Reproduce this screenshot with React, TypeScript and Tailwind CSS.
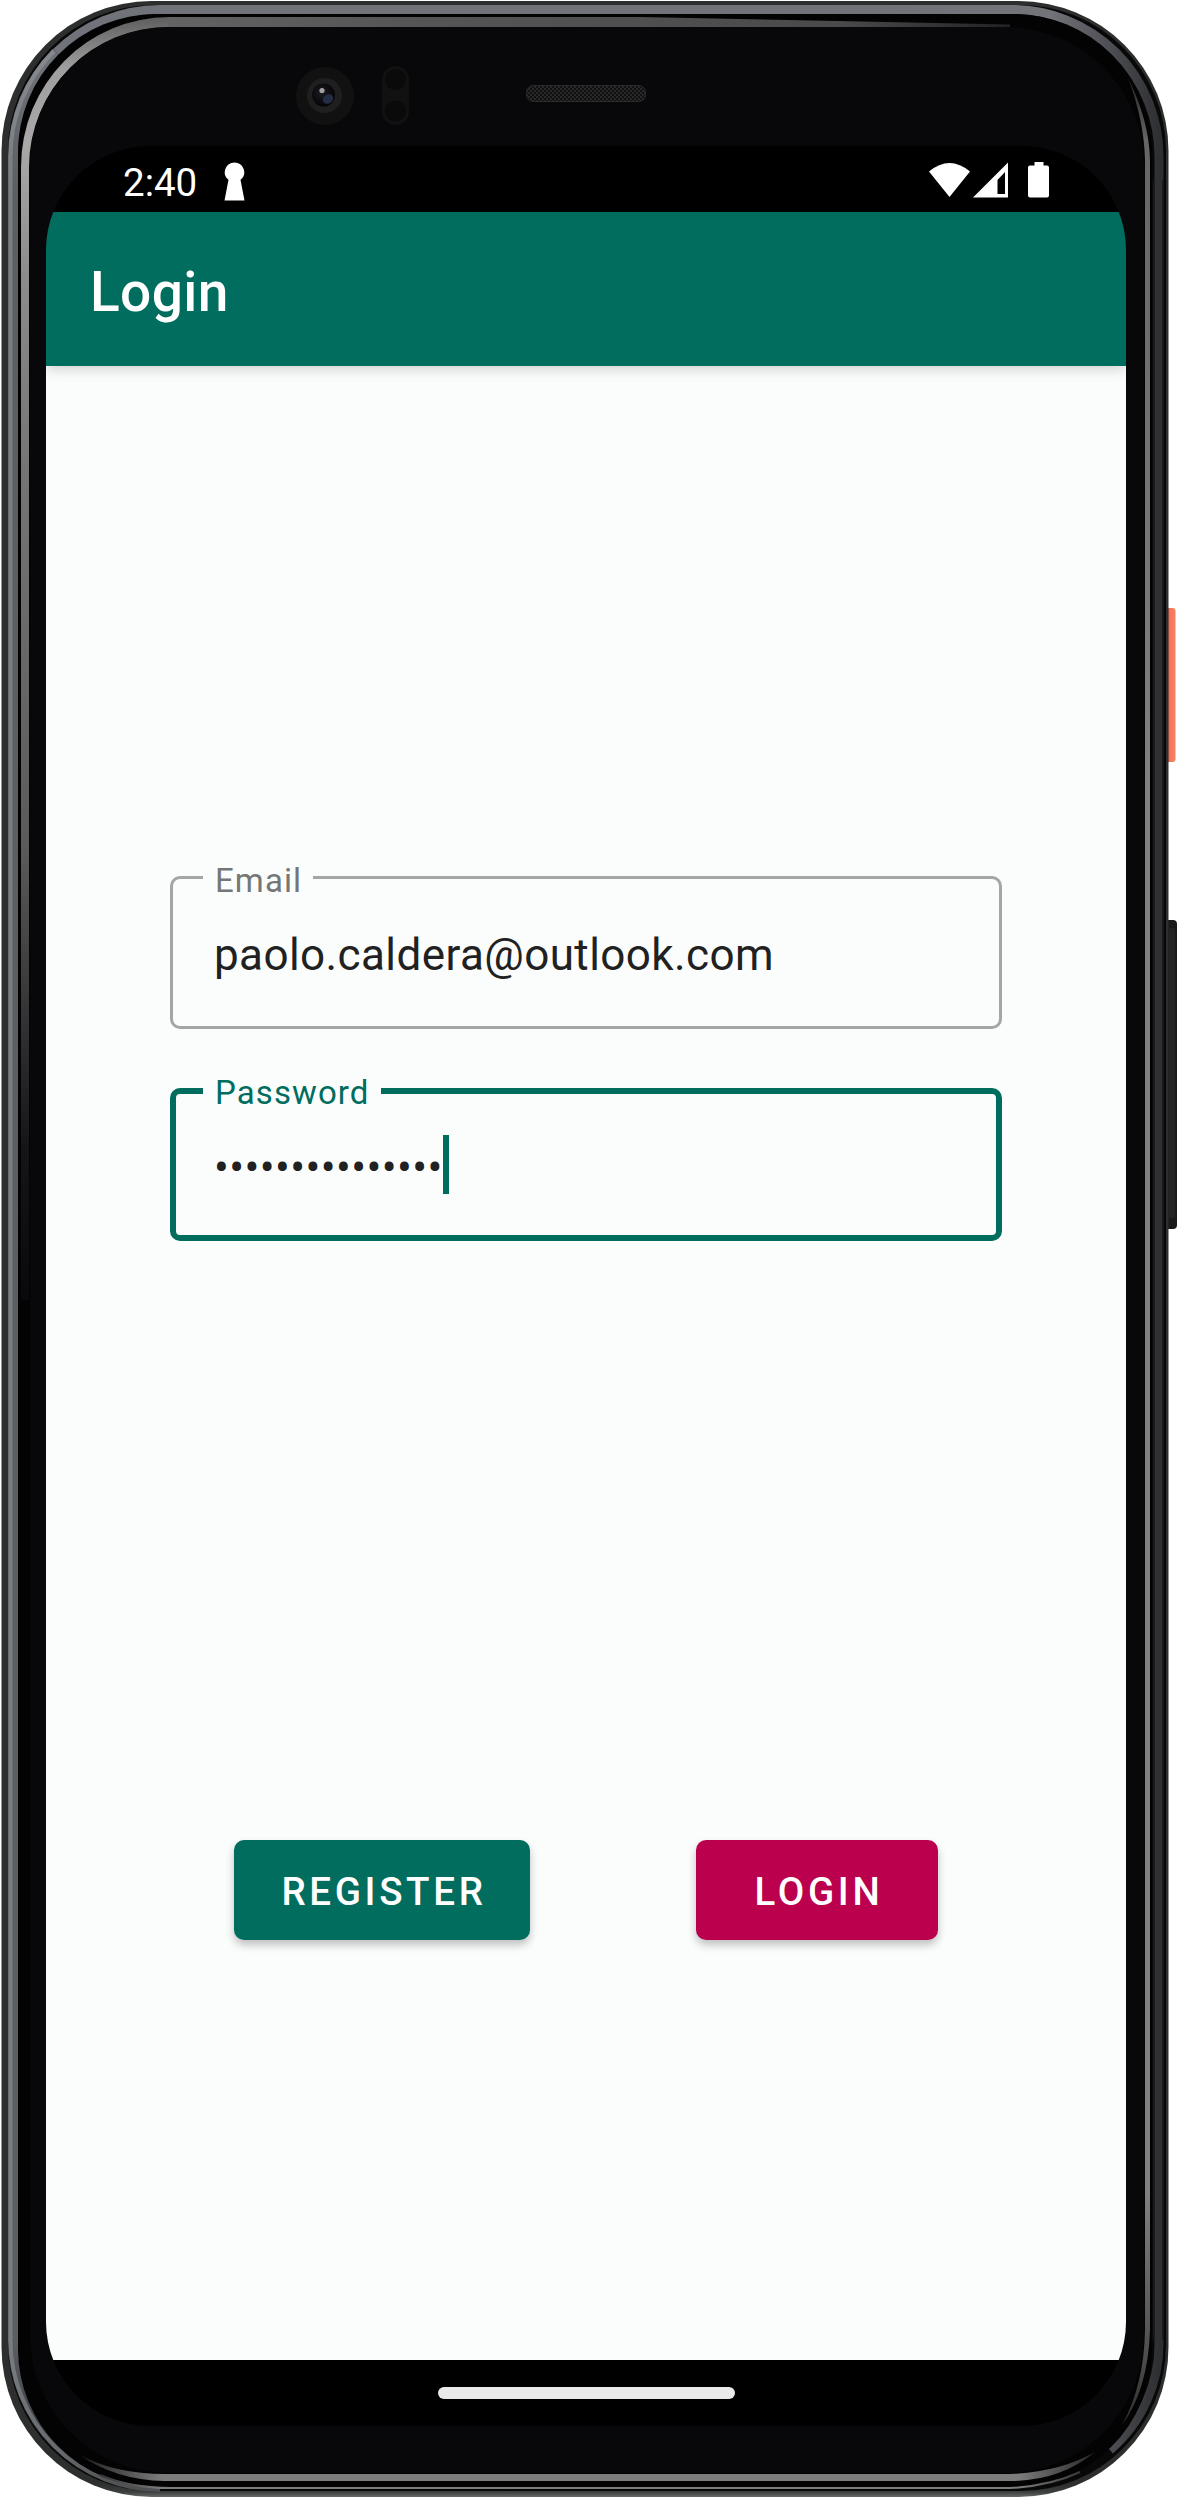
import React from "react";

function DeviceArt() {
  return (
    <svg className="absolute inset-0" width="1178" height="2498" viewBox="0 0 1178 2498" aria-hidden="true">
      <defs>
        <linearGradient id="rimTop" x1="50" x2="1160" y1="0" y2="0" gradientUnits="userSpaceOnUse">
          <stop offset="0" stopColor="#707379" />
          <stop offset="0.9" stopColor="#73737a" />
          <stop offset="0.96" stopColor="#4a4b50" />
          <stop offset="1" stopColor="#2e2f31" />
        </linearGradient>
        <linearGradient id="rimLeft" x1="0" x2="0" y1="50" y2="2488" gradientUnits="userSpaceOnUse">
          <stop offset="0" stopColor="#707379" />
          <stop offset="0.06" stopColor="#5b5e63" />
          <stop offset="0.94" stopColor="#5b5e63" />
          <stop offset="0.985" stopColor="#3a3b3e" />
          <stop offset="1" stopColor="#0c0c0d" />
        </linearGradient>
        <linearGradient id="topBand" x1="150" x2="1010" y1="0" y2="0" gradientUnits="userSpaceOnUse">
          <stop offset="0" stopColor="#646464" />
          <stop offset="0.3" stopColor="#555555" />
          <stop offset="0.8" stopColor="#4a4a4a" />
          <stop offset="1" stopColor="#222222" />
        </linearGradient>
        <linearGradient id="leftBand" x1="0" x2="0" y1="17" y2="1300" gradientUnits="userSpaceOnUse">
          <stop offset="0" stopColor="#5e5e5e" />
          <stop offset="0.04" stopColor="#9f9f9f" />
          <stop offset="0.1" stopColor="#a8a8a8" />
          <stop offset="0.2" stopColor="#8c8c8c" />
          <stop offset="0.35" stopColor="#757575" />
          <stop offset="0.65" stopColor="#5a5a5a" />
          <stop offset="0.88" stopColor="#151517" />
          <stop offset="1" stopColor="#09090b" />
        </linearGradient>
        <linearGradient id="rightBand" x1="0" x2="0" y1="70" y2="2430" gradientUnits="userSpaceOnUse">
          <stop offset="0" stopColor="#1c1c1d" />
          <stop offset="0.03" stopColor="#666666" />
          <stop offset="0.3" stopColor="#808080" />
          <stop offset="0.9" stopColor="#808080" />
          <stop offset="0.97" stopColor="#4c4c4c" />
          <stop offset="1" stopColor="#2a2a2a" />
        </linearGradient>
        <linearGradient id="bottomBand" x1="80" x2="1100" y1="0" y2="0" gradientUnits="userSpaceOnUse">
          <stop offset="0" stopColor="#1c1c1c" />
          <stop offset="0.08" stopColor="#7c7c7c" />
          <stop offset="0.92" stopColor="#7c7c7c" />
          <stop offset="1" stopColor="#222222" />
        </linearGradient>
        <linearGradient id="body" x1="0" x2="0" y1="2484" y2="2497" gradientUnits="userSpaceOnUse">
          <stop offset="0" stopColor="#2d2e2e" />
          <stop offset="0.6" stopColor="#3c3d3d" />
          <stop offset="1" stopColor="#666767" />
        </linearGradient>
        <linearGradient id="orange" x1="1167" x2="1176" y1="0" y2="0" gradientUnits="userSpaceOnUse">
          <stop offset="0" stopColor="#d9583e" />
          <stop offset="0.35" stopColor="#f4775b" />
          <stop offset="1" stopColor="#f58468" />
        </linearGradient>
        <radialGradient id="lens" cx="0.4" cy="0.4" r="0.6">
          <stop offset="0" stopColor="#1a1a20" />
          <stop offset="1" stopColor="#050507" />
        </radialGradient>
        <pattern id="mesh" width="4" height="4" patternUnits="userSpaceOnUse">
          <rect width="4" height="4" fill="#101010" />
          <circle cx="1" cy="1" r="0.9" fill="#333333" />
          <circle cx="3" cy="3" r="0.9" fill="#333333" />
        </pattern>
      </defs>

      {/* side buttons */}
      <rect x="1160" y="608" width="15.5" height="154" rx="3" fill="url(#orange)" />
      <rect x="1160" y="920" width="17" height="309" rx="4" fill="#1a1a1a" />
      <rect x="1169" y="928" width="6" height="290" rx="2" fill="#242424" />

      {/* body and metallic rim */}
      <rect x="1.500" y="1" width="1167" height="2496" rx="150" fill="url(#body)" />
      <rect x="8" y="5" width="1158" height="2486" rx="146" fill="#080809" />
      <path d="M160 2487A147 147 0 0 1 13 2340V156.500A147 147 0 0 1 56.060 52.550" fill="none" stroke="url(#rimLeft)" strokeWidth="10" />
      <path d="M160 2490A150 150 0 0 1 10.500 2340V156.500A150 150 0 0 1 54 51" fill="none" stroke="#a0a3a9" strokeOpacity="0.45" strokeWidth="4" />
      <path d="M56.060 52.550A147 147 0 0 1 160 9.500H1012A147 147 0 0 1 1159 156.500V2340A140 140 0 0 1 1110 2450" fill="none" stroke="url(#rimTop)" strokeWidth="9" />
      <path d="M1153.500 180V2340M1163 180V2340" fill="none" stroke="#161617" strokeWidth="1.500" />

      {/* glass edge highlights */}
      <rect x="18" y="14" width="1134" height="2473" rx="138" fill="#030304" />
      <path d="M21 1300V167A148 150 0 0 1 169 17V27A140 140 0 0 0 29 167V1300Z" fill="url(#leftBand)" />
      <path d="M168.500 17H640L1010 24.500V27H168.500Z" fill="url(#topBand)" />
      <path d="M1145 2330V160Q1144 120 1128 78Q1149 120 1150 160V2330Q1148 2390 1122 2425Q1144 2385 1145 2330Z" fill="url(#rightBand)" />
      <path d="M80 2455Q115 2474 165 2474H1010Q1060 2472 1095 2452Q1060 2481 1010 2481H165Q115 2480 80 2455Z" fill="url(#bottomBand)" />
      <path d="M100 2475Q130 2488 170 2488H1010Q1050 2486 1080 2472" fill="none" stroke="url(#bottomBand)" strokeWidth="2" />
      <path d="M30 2335V165A138 138 0 0 1 168 27H1006A138 138 0 0 1 1144 165V2335A138 138 0 0 1 1006 2473H168A138 138 0 0 1 30 2335Z" fill="#08080a" />

      {/* front camera, sensors and speaker */}
      <circle cx="325" cy="96" r="29" fill="#111111" />
      <circle cx="324.5" cy="95.5" r="17.5" fill="#1f1f1f" />
      <circle cx="323.5" cy="95" r="11.500" fill="url(#lens)" />
      <ellipse cx="328" cy="99" rx="5.5" ry="4.500" fill="#252c45" transform="rotate(-35 328 99)" />
      <circle cx="322" cy="90.5" r="2.6" fill="#a0a0a4" />
      <rect x="382" y="66" width="27" height="59" rx="13.5" fill="#111112" />
      <circle cx="395.5" cy="79.5" r="10.5" fill="#0a0a0b" />
      <circle cx="395.5" cy="111" r="10.5" fill="#0a0a0b" />
      <rect x="526.5" y="85.5" width="119" height="16" rx="7" fill="url(#mesh)" stroke="#2b2b2b" />
    </svg>
  );
}

function StatusBar() {
  return (
    <div className="flex h-[66px] items-center bg-black px-[77px] text-white">
      <span className="w-[101px] pt-2 text-[38.5px] leading-[58px] whitespace-nowrap">2:40</span>
      <svg className="mt-1" width="21" height="39" viewBox="0 0 21 39" fill="#fff">
        <path d="M10.500 0.500A9.700 9.700 0 0 1 16.500 17.800L20.500 38.500H0.500L4.500 17.800A9.700 9.700 0 0 1 10.500 0.500Z" />
      </svg>
      <svg className="mt-0.5 ml-auto" width="120" height="36" viewBox="0 0 120 36" fill="#fff">
        <path d="M0 9.5Q20.5 -7.5 41 9.5L20.5 35Z" />
        <path fillRule="evenodd" d="M44 35.5L79 0.500V35.5ZM68.500 18V32H76V10Z" />
        <path d="M105.500 0H114.500V3.500H118Q120 3.500 120 5.500V33.5Q120 35.5 118 35.5H101Q99 35.5 99 33.5V5.5Q99 3.5 101 3.5H105.500Z" />
      </svg>
    </div>
  );
}

export default function App() {
  return (
    <div className="relative h-[2498px] w-[1178px] overflow-hidden bg-white pt-[146px] pl-[46px] font-[Roboto,sans-serif]">
      <DeviceArt />
      <main className="relative flex h-[2280px] w-[1080px] flex-col overflow-hidden rounded-[104px]">
        <StatusBar />
        <header className="z-10 flex h-[154px] items-center bg-[#006d5f] pt-1.5 pl-11 shadow-[0_2px_14px_rgba(0,0,0,0.2)]">
          <h1 className="text-[55px] leading-[64px] font-medium tracking-[0.4px] text-white">Login</h1>
        </header>
        <form className="flex flex-1 flex-col bg-[#fbfdfc] px-[124px] pt-[492px]" onSubmit={(e) => e.preventDefault()}>
          <fieldset className="h-[171px] rounded-[10px] border-[3px] border-[#a4a6a5] pl-[30px]">
            <legend className="h-[39px] w-[110px] pl-3 text-[33px] leading-[46px] tracking-[1.1px] text-[#757776]">Email</legend>
            <div className="pt-[25px] pl-[11px] text-[44px] leading-[66px] tracking-[0.41px] text-[#212121]">paolo.caldera@outlook.com</div>
          </fieldset>
          <fieldset className="mt-[42px] h-[170px] rounded-[10px] border-[6px] border-[#006d5f] pl-[27px]">
            <legend className="h-[40px] w-[178px] pl-3 text-[33px] leading-[44px] tracking-[1.1px] text-[#006d5f]">Password</legend>
            <div className="flex pt-6 pl-[11px] text-[44px] leading-[66px] tracking-[0.41px] text-[#212121]">
              •••••••••••••••
              <span className="h-[59px] w-[6px] bg-[#006d5f]" />
            </div>
          </fieldset>
          <div className="mt-[599px] flex gap-[166px] pl-16">
            <button className="h-[100px] w-[296px] rounded-[10px] bg-[#006d5f] pt-1 pl-1 text-[38.5px] font-medium tracking-[3.65px] text-white shadow-[0_5px_8px_rgba(0,0,0,0.24)]">REGISTER</button>
            <button className="h-[100px] w-[242px] rounded-[10px] bg-[#bb004d] pt-1 pl-1 text-[38.5px] font-medium tracking-[3.65px] text-white shadow-[0_5px_8px_rgba(0,0,0,0.24)]">LOGIN</button>
          </div>
        </form>
        <nav className="flex h-[66px] items-center justify-center bg-black">
          <span className="h-3 w-[297px] rounded-full bg-[#eaeaea]" />
        </nav>
      </main>
    </div>
  );
}
